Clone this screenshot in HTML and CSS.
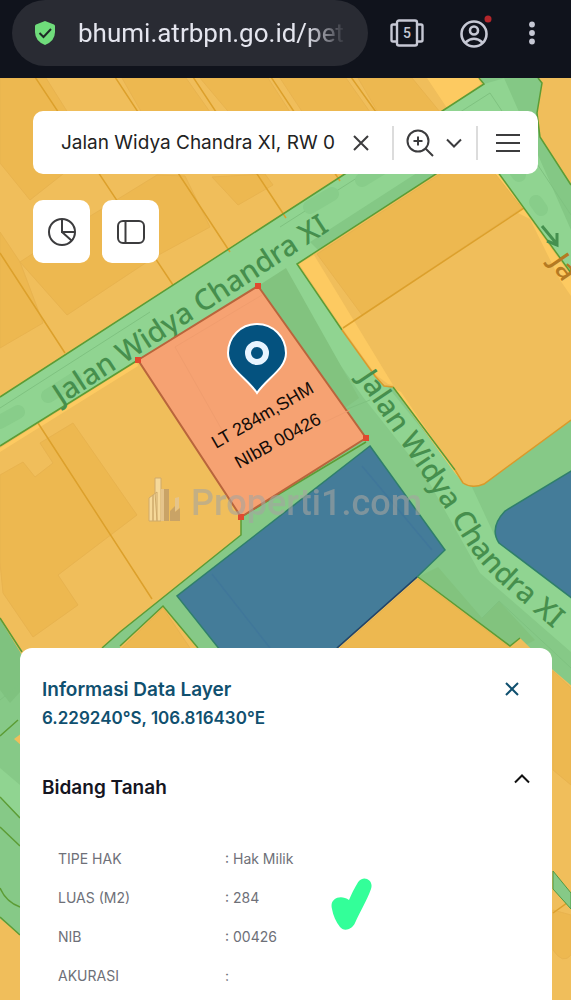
FILE: index.html
```
<!DOCTYPE html>
<html lang="id">
<head>
    <meta charset="UTF-8">
    <meta name="viewport" content="width=device-width, initial-scale=1.0">
    <title>Bhumi ATR/BPN - Peta</title>
    <link rel="stylesheet" href="styles.css">
</head>
<body>

<header class="browser-bar">
    <div class="address">
        <svg class="shield" viewBox="0 0 20 24" aria-hidden="true">
            <path d="M10 0 L19 3.5 Q20 4 20 5 V11 Q20 20 10 24 Q0 20 0 11 V5 Q0 4 1 3.500 Z" fill="#6fdc7b"/>
            <path d="M4.500 12 L8.500 16 L16 8" fill="none" stroke="#1d2a26" stroke-width="2"/>
        </svg>
        <input class="url" type="text" value="bhumi.atrbpn.go.id/pet" aria-label="Alamat situs">
    </div>
    <button class="bar-button" type="button" aria-label="Tab">
        <svg width="34" height="28" viewBox="0 0 34 28" fill="none" stroke="#c6c8d4" stroke-width="2.400">
            <rect x="7" y="1.500" width="20" height="25" rx="2"/>
            <path d="M7 5.500 H3 Q1.500 5.500 1.500 7 V21 Q1.500 22.500 3 22.500 H7 M27 5.500 H31 Q32.500 5.500 32.500 7 V21 Q32.500 22.500 31 22.500 H27"/>
            <text x="17" y="19" class="tab-count">5</text>
        </svg>
    </button>
    <button class="bar-button profile" type="button" aria-label="Profil">
        <svg width="34" height="40" viewBox="0 0 34 40" fill="none" stroke="#c6c8d4" stroke-width="2.600">
            <circle cx="16" cy="21" r="12.500"/>
            <circle cx="16" cy="17.500" r="4"/>
            <path d="M7.500 29.500 Q16 22 24.500 29.500"/>
            <circle cx="30" cy="6" r="3.500" fill="#b3262b" stroke="none"/>
        </svg>
    </button>
    <button class="bar-button" type="button" aria-label="Menu browser">
        <svg width="8" height="24" viewBox="0 0 8 24" fill="#c6c8d4">
            <circle cx="4" cy="3.500" r="2.900"/>
            <circle cx="4" cy="12" r="2.900"/>
            <circle cx="4" cy="20.500" r="2.900"/>
        </svg>
    </button>
</header>

<main class="map-page">
    <svg class="map" viewBox="0 78 571 922" preserveAspectRatio="xMidYMin slice" role="img" aria-label="Peta bidang tanah">
        <rect y="78" width="571" height="922" fill="#86c987"/>

        <!-- roads -->
        <g fill="#90d491">
            <path d="M0 397 L484 84 L505 78 L571 178 V273 L479 146 L297 264 L0 446 Z"/>
            <path d="M270 265 L297 264 L342 330 L455 470 L471 485 L498 543 L571 598 V652 L480 573 L425 475 L363 397 L287 290 Z"/>
            <path d="M0 768 L20 785 V817 L0 798 Z"/>
        </g>
        <path class="shade" d="M504 78 L538 78 L542 83 L537 113 L540 137 L571 185 V230 Z"/>
        <path d="M258 286 L286 268 L359 398 L345 408 Z" fill="#82c37f"/>
        <path d="M418 577 L438 567 L482 618 L499 601 L535 640 L520 648 H508 Z" fill="#82c37e"/>
        <path d="M0 618 L20 650 V692 L10 703 L0 690 Z" fill="#7fc27f"/>
        <path class="shade" d="M310 242 L440 158 L452 164 L318 250 Z"/>
        <g class="shade-line">
            <path d="M0 408 L150 312 M280 227 L490 93 L571 215"/>
            <path d="M482 618 L499 601 L571 668 M370 400 L345 410"/>
            <path d="M0 700 L20 684"/>
        </g>
        <g class="road-dash">
            <path d="M0 422 L18 412 M48 396 L75 379 M310 207 L332 194 M362 180 L385 166"/>
            <path d="M516 171 L519 175 M536 202 L541 209"/>
        </g>

        <!-- yellow parcels -->
        <g class="parcel">
            <path d="M-2 76 H479 L484 84 L-2 398 Z"/>
            <path d="M538 76 L542 83 L537 113 L540 137 L573 187 V76 Z"/>
            <path d="M297 264 L479 146 L573 275 V419 L484 484 Q472 489 463 483 L393 387 H386 L375 376 L342 330 Z"/>
            <path d="M-2 447 L138 360 L241 517 V535 L120 632 L102 648 V660 H25 L-2 616 Z"/>
            <path d="M163 606 L198 648 V660 H120 V646 Z"/>
            <path d="M418 577 L510 646 L520 638 L553 670 L573 687 V1002 H300 V680 L337 647 Z"/>
            <path d="M22 733 L14 739 L22 746 Z"/>
            <path d="M-2 917 L22 936 V1002 H-2 Z"/>
        </g>

        <!-- lighter verges -->
        <g fill="#fdca61">
            <path d="M299 264 L314 255 L393 385 L388 384 L376 375 L343 329 Z"/>
            <path d="M393 388 L401 392 L461 480 L455 473 Z"/>
            <path d="M484 154 L497 178 L518 213 L530 219 L560 280 L571 296 V276 Z"/>
            <path d="M427 78 H478 L481 84 L447 108 Z"/>
            <path d="M0 448 L137 362 L138 366 L0 452 Z"/>
        </g>

        <!-- buildings -->
        <g class="building">
            <path d="M0 78 H46 L92 151 L30 200 L0 163 Z"/>
            <path d="M122 78 H186 L210 112 L146 120 Z"/>
            <path d="M200 78 H268 L290 112 L232 116 Z"/>
            <path d="M280 78 H346 L370 112 L305 116 Z"/>
            <path d="M358 78 H412 L440 112 L380 116 Z"/>
            <path d="M0 232 L20 262 L43 323 L0 348 Z"/>
            <path d="M20 262 L92 215 L157 175 L185 176 L210 227 L153 258 L67 315 Z"/>
            <path d="M212 177 L238 205 L273 185 L265 174 Z"/>
            <path d="M317 254 L437 176 L478 152 L522 208 L362 315 Z"/>
            <path d="M0 475 L23 462 L35 477 L53 463 L40 443 L73 423 L137 515 L58 575 L78 605 L33 637 L3 593 L0 563 Z"/>
            <path d="M163 608 L190 648 H122 Z"/>
            <path d="M418 579 L510 648 H340 Z"/>
            <path d="M553 671 L571 688 V785 L553 770 Z"/>
            <path d="M553 910 L571 915 V955 Q563 965 553 950 Z"/>
        </g>

        <!-- parcel borders -->
        <g class="parcel-line">
            <path d="M35 77 L173 285 M115 77 L230 252 M193 77 L286 218 M271 77 L340 181 M351 77 L376 112"/>
            <path d="M0 253 L65 353 M38 423 L152 599 M343 328 L524 208 M553 913 L571 900"/>
        </g>
        <g class="green-line">
            <path d="M0 397 L484 84 L479 78 M538 78 L542 83 L537 113 L540 137 L571 185"/>
            <path d="M138 360 L0 446 M0 618 L22 652"/>
            <path d="M455 470 L393 387 M342 330 L297 264 L479 146 L571 273"/>
            <path d="M241 517 V535 L120 632 L102 648 M120 646 L163 606 L198 648"/>
            <path d="M418 577 L510 646 L520 638"/>
            <path d="M241 517 L366 442"/>
            <path d="M0 736 L18 720 M0 797 L20 818 M0 827 L20 846 M0 888 Q6 902 20 907 M0 917 L20 935"/>
        </g>
        <path d="M393 387 L384 386 L375 376 L342 330 M455 470 L463 483 Q472 489 484 484 L571 420" fill="none" stroke="#d99a2b" stroke-width="1.500"/>
        <path d="M553 871 L571 893 V909 L553 889 Z" fill="#86c987" stroke="#4f9a45"/>

        <!-- blue parcels -->
        <g fill="#447c99" stroke="#2f7f6b" stroke-width="1.500">
            <path d="M370 446 L445 550 L417 577 L337 648 V660 H228 L177 596 Z"/>
            <path d="M573 470 L505 511 Q489 528 499 543 L573 599 Z"/>
        </g>
        <path d="M417 577 L337 648" stroke="#27406b" stroke-width="1.500"/>
        <path d="M212 574 L270 648 M362 466 L432 550" stroke="#40779a" stroke-width="1.500"/>

        <g class="road-name">
            <text transform="translate(61 405) rotate(-33)">Jalan Widya Chandra XI</text>
            <path id="road-east" class="road-path" d="M357 378 L454 522 Q471 556 500 583 L570 643"/>
            <text><textPath href="#road-east">Jalan Widya Chandra XI</textPath></text>
            <text class="road-side" transform="translate(549 262) rotate(56)">Ja</text>
        </g>
        <path d="M542 226 L556 243 M557 233 L557 245 L547 241" fill="none" stroke="#45904f" stroke-width="3"/>

        <!-- selected parcel -->
        <path d="M138 360 L258 286 L366 438 L241 517 Z" fill="#f6a272" stroke="#b9653c" stroke-width="2"/>
        <path d="M175 347 L262 295 M175 347 L222 430 M325 422 L350 410" fill="none" stroke="#f09d6e"/>
        <g fill="#e04a2f">
            <rect x="135" y="357" width="6" height="6"/>
            <rect x="255" y="283" width="6" height="6"/>
            <rect x="363" y="435" width="6" height="6"/>
            <rect x="238" y="514" width="6" height="6"/>
        </g>
        <path d="M257 393 C247 378 228 369 228 353 A29 29 0 0 1 286 353 C286 369 267 378 257 393 Z" fill="#04527f" stroke="#fff" stroke-width="2"/>
        <circle cx="257" cy="353" r="9" fill="none" stroke="#e8f4ff" stroke-width="6"/>
        <g class="parcel-name">
            <text transform="translate(216 449) rotate(-30)">LT 284m,SHM</text>
            <text transform="translate(239 469) rotate(-29)">NIbB 00426</text>
        </g>

        <!-- watermark -->
        <g class="watermark">
            <g fill="#f8e2ae" stroke="#c4a470">
                <path d="M149 521 V498 L153 495 V521 Z M153 521 V495 L157 492 V521 Z M155 492 V478 H161 V521 H157 Z"/>
            </g>
            <path d="M161 489 H169 V521 H161 Z M175 498 L179 497 V508 L175 512 Z" fill="#e2c79b"/>
            <path d="M164 489 H169 V521 H164 Z M170 521 V511 L175 506 V521 Z M175 521 V512 L180 508 V521 Z" fill="#bd9a6a"/>
            <text x="191" y="515">Properti1.com</text>
        </g>
    </svg>

    <form class="search">
        <input class="search-input" type="text" value="Jalan Widya Chandra XI, RW 0" aria-label="Cari lokasi">
        <button class="icon-button clear" type="reset" aria-label="Hapus">
            <svg width="18" height="18" viewBox="0 0 18 18"><path d="M2 2 L16 16 M16 2 L2 16"/></svg>
        </button>
        <span class="divider"></span>
        <button class="icon-button zoom" type="button" aria-label="Jenis pencarian">
            <svg width="28" height="28" viewBox="0 0 28 28"><circle cx="12" cy="12" r="10.500"/><path d="M19.500 19.500 L27 27 M12 7.500 V16.500 M7.500 12 H16.500"/></svg>
            <svg width="16" height="10" viewBox="0 0 16 10"><path d="M1 1.500 L8 8.500 L15 1.500"/></svg>
        </button>
        <span class="divider"></span>
        <button class="icon-button menu" type="button" aria-label="Menu">
            <svg width="24" height="20" viewBox="0 0 24 20"><path d="M0 2 H24 M0 10 H24 M0 18 H24"/></svg>
        </button>
    </form>

    <div class="tools">
        <button class="tool" type="button" aria-label="Statistik">
            <svg width="28" height="28" viewBox="0 0 28 28"><circle cx="14" cy="14" r="13"/><path d="M14 1 V14 H27 M14 14 L23.500 22.500"/></svg>
        </button>
        <button class="tool" type="button" aria-label="Panel samping">
            <svg width="28" height="24" viewBox="0 0 28 24"><rect x="1" y="1" width="26" height="22" rx="5"/><path d="M8.500 1 V23"/></svg>
        </button>
    </div>

    <section class="panel">
        <div class="panel-head">
            <div>
                <h1 class="panel-title">Informasi Data Layer</h1>
                <p class="coords">6.229240°S, 106.816430°E</p>
            </div>
            <button class="icon-button close" type="button" aria-label="Tutup">
                <svg width="14" height="14" viewBox="0 0 14 14"><path d="M1 1 L13 13 M13 1 L1 13"/></svg>
            </button>
        </div>
        <div class="group-head">
            <h2 class="group-title">Bidang Tanah</h2>
            <button class="icon-button collapse" type="button" aria-label="Ciutkan">
                <svg width="16" height="10" viewBox="0 0 16 10"><path d="M1 8.500 L8 1.500 L15 8.500"/></svg>
            </button>
        </div>
        <table class="details">
            <tr><th scope="row">TIPE HAK</th><td>: Hak Milik</td></tr>
            <tr><th scope="row">LUAS (M2)</th><td>: 284</td></tr>
            <tr><th scope="row">NIB</th><td>: 00426</td></tr>
            <tr><th scope="row">AKURASI</th><td>:</td></tr>
        </table>
        <svg class="mark" width="42" height="52" viewBox="0 0 42 52" aria-hidden="true">
            <path d="M1 31 C-2 20 10 16 18 22 C22 13 25 7 28 3 C33 -3 43 2 40 11 C36 22 29 34 24 45 C20 53 12 53 9 49 C5 44 2 37 1 31 Z" fill="#33ff99"/>
        </svg>
    </section>
</main>

</body>
</html>
```
FILE: styles.css
```
* {
    box-sizing: border-box;
}
body {
    display: flex;
    flex-direction: column;
    min-height: 100vh;
    margin: 0;
    font-family: Inter, "Liberation Sans", sans-serif;
    background-color: #f0be5b;
}
button {
    padding: 0;
    border: none;
    background: none;
}
input {
    border: none;
    outline: none;
    background: none;
}

/* Browser bar */
.browser-bar {
    display: flex;
    align-items: flex-start;
    height: 78px;
    padding: 0 35px 0 12px;
    background-color: #10131c;
}
.address {
    display: flex;
    align-items: center;
    flex: 1;
    gap: 23px;
    min-width: 0;
    height: 66px;
    margin-right: 22px;
    padding: 0 22px 0 23px;
    border-radius: 33px;
    background-color: #292b33;
}
.shield {
    flex: none;
    width: 20px;
    height: 24px;
}
.url {
    flex: 1;
    min-width: 0;
    padding: 0;
    color: #e4e5ee;
    font-family: Roboto, sans-serif;
    font-size: 26px;
    -webkit-mask-image: linear-gradient(to right, #000 85%, transparent);
    mask-image: linear-gradient(to right, #000 85%, transparent);
}
.bar-button {
    display: flex;
    align-items: center;
    height: 66px;
    margin-right: 34px;
}
.bar-button.profile {
    margin-right: 36px;
}
.bar-button:last-child {
    margin-right: 0;
}
.tab-count {
    fill: #c6c8d4;
    stroke: none;
    font: 500 14px Roboto, sans-serif;
    text-anchor: middle;
}

/* Map */
.map-page {
    position: relative;
    display: flex;
    flex-direction: column;
    flex: 1;
    overflow: hidden;
}
.map {
    position: absolute;
    top: 0;
    left: 0;
    width: 100%;
    height: 100%;
}
.parcel {
    fill: #f0be5b;
}
.building {
    fill: #edb850;
    stroke: #e8b34f;
}
.parcel-line {
    fill: none;
    stroke: #dca02c;
    stroke-width: 1.5;
}
.green-line {
    fill: none;
    stroke: #5c9c35;
    stroke-width: 1.5;
}
.shade {
    fill: #84c885;
}
.shade-line {
    fill: none;
    stroke: #7fc280;
}
.road-dash {
    fill: none;
    stroke: #88cd8a;
    stroke-width: 14;
    stroke-linecap: round;
}
.road-name {
    fill: #468f4d;
    font: 500 29px "Noto Sans", sans-serif;
}
.road-path {
    fill: none;
}
.road-side {
    fill: #b57a22;
}
.parcel-name {
    fill: #140c08;
    font: 18px "Liberation Sans", sans-serif;
}
.watermark {
    opacity: 0.75;
}
.watermark text {
    fill: #a5a5a0;
    font: 500 36px Roboto, sans-serif;
    opacity: 0.8;
}

/* Search and tools */
.search {
    position: relative;
    display: flex;
    align-items: center;
    height: 63px;
    margin: 33px 33px 0;
    padding: 0 18px 0 28px;
    border-radius: 10px;
    background-color: #fff;
}
.search-input {
    flex: 1;
    min-width: 0;
    padding: 0;
    color: #222;
    font-family: inherit;
    font-size: 19px;
}
.icon-button {
    display: flex;
    align-items: center;
}
.icon-button svg,
.tool svg {
    fill: none;
    stroke: #3c3c3e;
    stroke-width: 2;
}
.clear {
    margin: 0 22px 0 14px;
}
.divider {
    width: 2px;
    height: 34px;
    background-color: #dcdcdc;
}
.zoom {
    gap: 12px;
    margin: 0 14px 0 12px;
}
.menu {
    margin-left: 18px;
}
.tools {
    position: relative;
    display: flex;
    gap: 12px;
    margin: 26px 33px 0;
}
.tool {
    display: flex;
    align-items: center;
    justify-content: center;
    width: 57px;
    height: 63px;
    border-radius: 10px;
    background-color: #fff;
}

/* Info panel */
.panel {
    position: relative;
    margin: auto 19px 0 20px;
    padding: 28px 22px 5px;
    border-radius: 12px 12px 0 0;
    background-color: #fff;
}
.panel-head,
.group-head {
    display: flex;
    justify-content: space-between;
    align-items: flex-start;
}
.panel-title,
.group-title,
.coords {
    margin: 0;
    font-weight: 600;
}
.panel-title {
    color: #10506f;
    font-size: 19px;
    line-height: 28px;
}
.coords {
    color: #10506f;
    font-size: 17px;
    line-height: 28px;
}
.group-head {
    margin-top: 42px;
}
.group-title {
    color: #15151f;
    font-size: 19px;
    line-height: 28px;
}
.icon-button.close {
    margin: 6px 11px 0 0;
}
.close svg {
    stroke: #10506f;
}
.collapse svg {
    stroke: #111;
}
.details {
    width: 100%;
    margin-top: 37px;
    padding-left: 16px;
    border-spacing: 0;
    color: #6e7078;
    font-size: 14px;
    line-height: 39px;
}
.details th,
.details td {
    padding: 0;
    font-weight: 400;
    text-align: left;
}
.details th {
    width: 167px;
}
.mark {
    position: absolute;
    top: 230px;
    left: 311px;
}
```
